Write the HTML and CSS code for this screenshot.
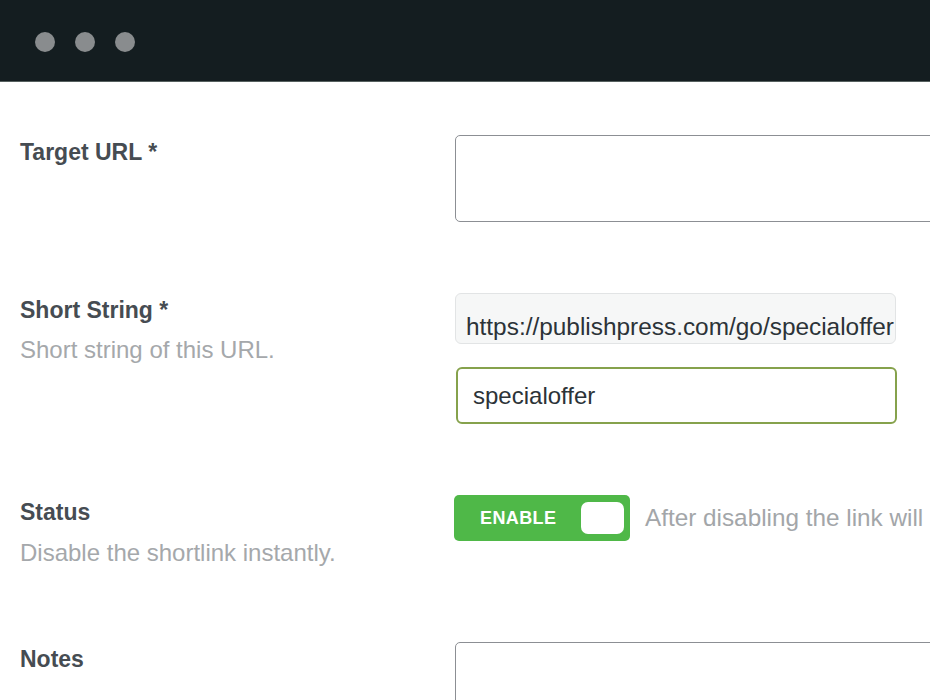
FILE: index.html
```html
<!DOCTYPE html>
<html lang="en">
<head>
<meta charset="utf-8">
<title>Shortlink settings</title>
<link rel="stylesheet" href="styles.css">
</head>
<body>
<div class="window">
  <header class="titlebar">
    <span class="dot"></span><span class="dot"></span><span class="dot"></span>
  </header>
  <main class="form">
    <section class="row row-target">
      <div class="label-col"><div class="label">Target URL *</div></div>
      <div class="field-col"><div class="textbox tall"></div></div>
    </section>
    <section class="row row-short">
      <div class="label-col">
        <div class="label">Short String *</div>
        <div class="desc">Short string of this URL.</div>
      </div>
      <div class="field-col">
        <div class="prefix">https://publishpress.com/go/specialoffer</div>
        <div class="slug">specialoffer</div>
      </div>
    </section>
    <section class="row row-status">
      <div class="label-col">
        <div class="label">Status</div>
        <div class="desc desc-status">Disable the shortlink instantly.</div>
      </div>
      <div class="field-col inline">
        <div class="toggle"><span class="toggle-text">ENABLE</span><span class="knob"></span></div>
        <span class="hint">After disabling the link will</span>
      </div>
    </section>
    <section class="row row-notes">
      <div class="label-col"><div class="label">Notes</div></div>
      <div class="field-col"><div class="textbox notes"></div></div>
    </section>
  </main>
</div>
</body>
</html>
```

FILE: styles.css
```css
* { box-sizing: border-box; }
html, body {
  margin: 0;
  padding: 0;
  background: #ffffff;
  overflow: hidden;
  width: 930px;
  height: 700px;
}
body {
  font-family: "Liberation Sans", Arial, sans-serif;
  color: #3c434a;
}
.window {
  height: 700px;
  overflow: hidden;
}
.titlebar {
  height: 82px;
  background: #141d20;
  border-bottom: 1px solid #56605f;
  display: flex;
  align-items: center;
  gap: 20px;
  padding: 2px 0 0 35px;
}
.dot {
  width: 20px;
  height: 20px;
  border-radius: 50%;
  background: #898c8e;
}
.form {
  padding: 53px 0 0 20px;
}
.row {
  display: flex;
  align-items: flex-start;
  margin-bottom: 71px;
}
.row-status { margin-bottom: 77px; }
.label-col {
  width: 435px;
  flex: none;
  padding-top: 5px;
}
.label {
  font-size: 23px;
  line-height: 24px;
  font-weight: 700;
  color: #464c52;
}
.desc {
  margin-top: 16px;
  font-size: 24px;
  line-height: 24px;
  color: #a5a8ab;
}
.desc-status { margin-top: 17px; }
.field-col {
  flex: none;
  width: 600px;
  display: flex;
  flex-direction: column;
}
.field-col.inline {
  flex-direction: row;
  align-items: center;
  gap: 15px;
}
.textbox {
  border: 1px solid #8c8f94;
  border-radius: 5px;
  background: #fff;
}
.textbox.tall { height: 87px; }
.textbox.notes { height: 120px; }
.prefix {
  width: 441px;
  height: 51px;
  background: #f6f7f7;
  border: 1px solid #e2e4e5;
  border-radius: 6px;
  padding: 21px 0 0 10px;
  font-size: 24.4px;
  line-height: 24px;
  color: #2c3338;
  white-space: nowrap;
  overflow: hidden;
}
.slug {
  margin-top: 23px;
  margin-left: 1px;
  width: 441px;
  height: 57px;
  border: 2px solid #86a24c;
  border-radius: 6px;
  padding: 0 0 0 15px;
  display: flex;
  align-items: center;
  font-size: 24px;
  color: #2c3338;
}
.toggle {
  width: 176px;
  height: 46px;
  margin-left: -1px;
  background: #4fb848;
  border-radius: 5px;
  display: flex;
  align-items: center;
  padding: 0 6px 0 26px;
  flex: none;
}
.toggle-text {
  color: #ffffff;
  font-weight: 700;
  font-size: 18px;
  letter-spacing: 0.4px;
}
.knob {
  margin-left: auto;
  width: 43px;
  height: 32px;
  background: #ffffff;
  border-radius: 7px;
}
.hint {
  font-size: 24.3px;
  color: #a3a6a9;
  white-space: nowrap;
}
```
